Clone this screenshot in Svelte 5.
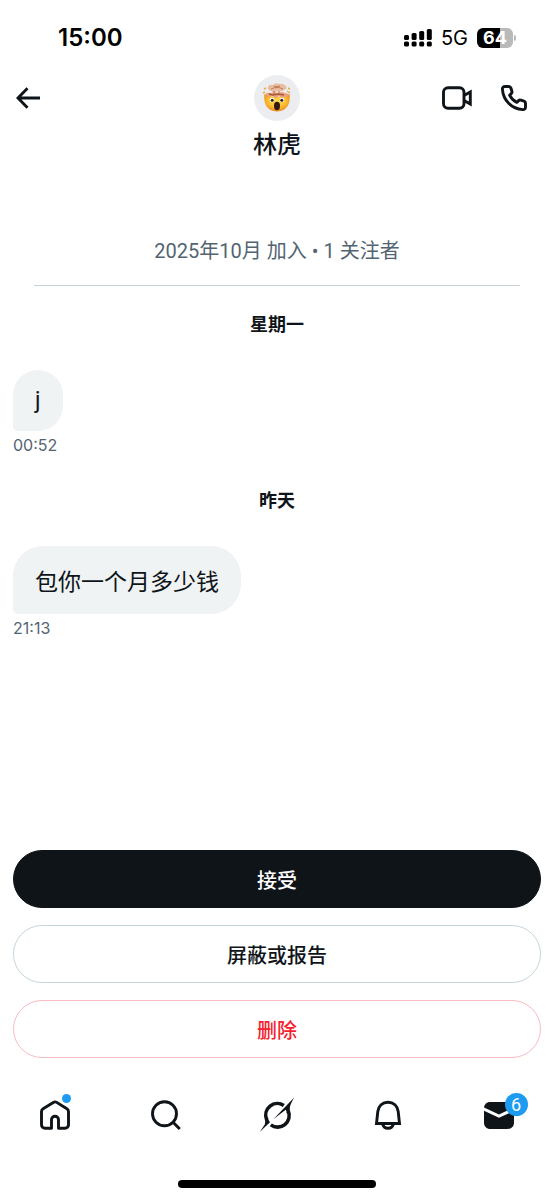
<script lang="ts">
	type Message = { day: string; text: string; time: string };

	const messages: Message[] = [
		{ day: '星期一', text: 'j', time: '00:52' },
		{ day: '昨天', text: '包你一个月多少钱', time: '21:13' }
	];

	const battery = 64;
	const bars = [5, 7, 9, 11];
	let unread = $state(6);
</script>

<div class="screen">
	<div class="status">
		<span class="clock">15:00</span>
		<div class="indicators">
			<svg class="signal" width="28" height="22" viewBox="0 0 28 22" aria-hidden="true">
				{#each bars as h, i}
					<rect x={i * 7.6} y={13 - h} width="5" height={h} rx="1.5" />
					<rect x={i * 7.6} y="14.5" width="5" height="5" rx="1.5" />
				{/each}
			</svg>
			<span class="network">5G</span>
			<div class="battery">
				<span class="cell" style="--charge: {battery}%">{battery}</span>
				<span class="cap"></span>
			</div>
		</div>
	</div>

	<header>
		<button class="icon back" aria-label="返回">
			<svg width="24" height="22" viewBox="0 0 24 22" fill="none" stroke="currentColor" stroke-width="2.9">
				<path d="M24 11H2.5M11.500 1.300L2 11l9.500 9.700" />
			</svg>
		</button>
		<div class="person">
			<div class="avatar">
				<svg width="30" height="30" viewBox="0 0 30 30" aria-hidden="true">
					<defs>
						<radialGradient id="face" cx="50%" cy="40%" r="60%">
							<stop offset="0" stop-color="#ffdc4a" />
							<stop offset="0.6" stop-color="#fbbd31" />
							<stop offset="1" stop-color="#e98b1c" />
						</radialGradient>
					</defs>
					<path d="M2.500 11C1 20 5 28.500 15 28.500S29 20 27.500 11q-4 3-12.500 3T2.500 11z" fill="url(#face)" />
					<path d="M3 11q3-2 6-1l3-1 4 1 4-1 3 1 4 1q-1 4-5 3l-2 1-3-2-3 2-4-2-3 1z" fill="#e9a17b" />
					<path d="M7 11l4 1 5-1 6 1" fill="none" stroke="#a85b3c" stroke-width="1.5" />
					<path d="M6 4Q7 1 11 2q3-3 6-1 4-1 7 2 2 3-2 4-2 2-6 1-4 2-7 0-4-1-3-4z" fill="#e9bda2" />
					<path d="M9 6q6-3 12 0M12 3l2 1 4-1M12 8v3M17 8v3" fill="none" stroke="#c27a58" stroke-width="1.2" />
					<path d="M2 6l2-1M1 10l2-1M26 5l2 1M25 8l3 2" stroke="#e9ae42" stroke-width="1.5" />
					<ellipse cx="10" cy="17" rx="2.3" ry="2.3" fill="#fff" />
					<ellipse cx="20" cy="17" rx="2.3" ry="2.3" fill="#fff" />
					<circle cx="10.2" cy="17.2" r="1.5" fill="#2f1c14" />
					<circle cx="19.8" cy="17.2" r="1.5" fill="#2f1c14" />
					<ellipse cx="15" cy="23" rx="3" ry="4.2" fill="#35170f" />
				</svg>
			</div>
			<h1>林虎</h1>
		</div>
		<div class="calls">
			<button class="icon" aria-label="视频通话">
				<svg width="30" height="24" viewBox="0 0 30 24" fill="none" stroke="currentColor" stroke-width="2.9">
					<rect x="1.5" y="1.8" width="20.5" height="20.4" rx="4.5" />
					<path d="M22 9.500l6.300-3.500v12L22 14.500" />
				</svg>
			</button>
			<button class="icon" aria-label="语音通话">
				<svg width="28" height="28" viewBox="0 0 28 28" fill="none" stroke="currentColor" stroke-width="2.9" stroke-linejoin="round">
					<path d="M8.800 2.500H5C3.300 2.500 2.300 3.500 2.400 5.200 3.200 16.500 11.500 24.800 22.800 25.600c1.700.1 2.700-.9 2.700-2.600v-3.800c0-1-.6-1.800-1.500-2.100l-3.200-1c-.9-.3-1.600-.1-2.200.5l-1.800 1.800c-3-1.400-5.800-4.200-7.200-7.200l1.800-1.800c.6-.6.8-1.300.5-2.200L10.900 4c-.3-.9-1.100-1.500-2.100-1.500z" />
				</svg>
			</button>
		</div>
	</header>

	<main>
		<p class="joined">2025年10月 加入 • 1 关注者</p>
		{#each messages as message}
			<section>
				<h2>{message.day}</h2>
				<div class="bubble">{message.text}</div>
				<time>{message.time}</time>
			</section>
		{/each}
	</main>

	<div class="actions">
		<button class="accept">接受</button>
		<button>屏蔽或报告</button>
		<button class="delete">删除</button>
	</div>

	<nav>
		<a href="#home" aria-label="主页">
			<svg width="30" height="30" viewBox="0 0 30 30" fill="none" stroke="currentColor" stroke-width="2.9" stroke-linejoin="round">
				<path d="M11.500 28.300H5c-2 0-3.500-1.500-3.500-3.500V11.500c0-1.200.6-2.200 1.600-2.800L13.300 2.400c1.100-.7 2.300-.7 3.400 0l10.200 6.300c1 .6 1.600 1.600 1.600 2.800v13.300c0 2-1.500 3.500-3.500 3.500h-6.500v-8.500c0-2-1.500-3.500-3.500-3.500s-3.500 1.500-3.500 3.500z" />
			</svg>
			<span class="dot"></span>
		</a>
		<a href="#search" aria-label="搜索">
			<svg width="30" height="30" viewBox="0 0 30 30" fill="none" stroke="currentColor" stroke-width="2.9">
				<circle cx="13.5" cy="13.7" r="12" />
				<path d="M22 22.200l6.800 6.800" />
			</svg>
		</a>
		<a href="#grok" aria-label="Grok">
			<svg width="36" height="36" viewBox="0 0 36 36" fill="none" stroke="currentColor" stroke-width="3.6">
				<path d="M24.800 8.500A11.600 11.600 0 0 0 7.600 22.500" />
				<path d="M11.800 27.900A11.600 11.600 0 0 0 29.300 14" />
				<path
					d="M14.300 22.300L35.200.6Q31.500 7 30.900 10q-.3 2.500.2 5l-3.400 1.500q0-2.500-1-3.700zM.7 34.900L5.800 27.500Q6.500 25 5.900 21.500l3.200-.8q.2 3 1.900 4.600z"
					fill="currentColor"
					stroke="none"
				/>
			</svg>
		</a>
		<a href="#notifications" aria-label="通知">
			<svg width="28" height="30" viewBox="0 0 28 30" fill="none" stroke="currentColor" stroke-width="2.9">
				<path d="M2.500 23.500h23l-1.300-12C23.600 6 19.500 2.200 14 2.200S4.400 6 3.800 11.500z" />
				<path d="M8.500 23.500c.5 3 2.700 4.800 5.500 4.800s5-1.800 5.500-4.800" />
			</svg>
		</a>
		<a href="#messages" aria-label="私信">
			<svg width="30" height="28" viewBox="0 0 30 28" fill="currentColor">
				<path d="M0 6.500C.5 2.800 3 1 6.500 1h17C27 1 29.500 2.800 30 6.500L15 13.500z" />
				<path d="M0 9.800l15 7 15-7v11.700c0 4-2.500 6.500-6.500 6.500h-17C2.500 28 0 25.500 0 21.500z" />
			</svg>
			{#if unread}
				<span class="badge">{unread}</span>
			{/if}
		</a>
	</nav>

	<div class="home-bar"></div>
</div>

<style>
	:global(body) {
		margin: 0;
		background: #fff;
	}

	.screen {
		display: flex;
		flex-direction: column;
		min-height: 100vh;
		color: #0f1419;
		font-family: Roboto, 'Noto Sans CJK SC', sans-serif;
	}

	button {
		font: inherit;
		color: inherit;
		cursor: pointer;
	}

	svg {
		display: block;
	}

	.status {
		display: flex;
		align-items: center;
		justify-content: space-between;
		height: 75px;
		padding: 0 38px 0 58px;
		color: #000;
		font-family: Inter, sans-serif;
	}

	.clock {
		font-size: 24px;
		font-weight: 600;
	}

	.indicators {
		display: flex;
		align-items: center;
		gap: 9px;
	}

	.network {
		font-size: 20px;
	}

	.battery {
		display: flex;
		align-items: center;
		gap: 1px;
	}

	.cell {
		width: 36px;
		border-radius: 6px;
		background: linear-gradient(to right, #000 var(--charge), #b9b9b9 var(--charge));
		color: #fff;
		font-size: 18px;
		font-weight: 700;
		line-height: 20px;
		text-align: center;
	}

	.cap {
		width: 2px;
		height: 6px;
		border-radius: 0 2px 2px 0;
		background: #b9b9b9;
	}

	header {
		display: grid;
		grid-template-columns: 1fr auto 1fr;
		align-items: start;
		padding: 0 26px 0 16px;
	}

	.icon {
		display: flex;
		align-items: center;
		height: 46px;
		padding: 0;
		border: 0;
		background: none;
	}

	.person {
		display: flex;
		flex-direction: column;
		align-items: center;
		gap: 8px;
		/* keeps the name centred against the uneven side padding */
		margin-left: 10px;
	}

	.avatar {
		display: flex;
		align-items: center;
		justify-content: center;
		width: 46px;
		height: 46px;
		border-radius: 50%;
		background: #ebedf1;
	}

	h1 {
		margin: 0;
		font-size: 24px;
		font-weight: 500;
		line-height: 32px;
	}

	.calls {
		display: flex;
		justify-content: flex-end;
		gap: 28px;
	}

	main {
		flex: 1;
		padding: 76px 13px 0;
	}

	.joined {
		margin: 0 21px;
		padding-bottom: 20px;
		border-bottom: 1px solid #c5d2dc;
		color: #536471;
		font-size: 20px;
		line-height: 28px;
		text-align: center;
	}

	section {
		display: flex;
		flex-direction: column;
		align-items: flex-start;
		padding-top: 26px;
		margin-bottom: 7px;
	}

	h2 {
		align-self: center;
		margin: 0 0 32px;
		font-size: 18px;
		font-weight: 700;
		line-height: 26px;
	}

	.bubble {
		padding: 17px 22px;
		border-radius: 30px 30px 30px 5px;
		background: #eff3f4;
		font-size: 23px;
	}

	time {
		margin-top: 4px;
		color: #536471;
		font-family: Inter, sans-serif;
		font-size: 16px;
		line-height: 20px;
	}

	.actions {
		display: flex;
		flex-direction: column;
		gap: 17px;
		padding: 0 13px;
	}

	.actions button {
		height: 58px;
		border: 1px solid #c5d5de;
		border-radius: 29px;
		background: #fff;
		font-size: 20px;
		font-weight: 500;
	}

	.actions .accept {
		border-color: #0f1419;
		background: #0f1419;
		color: #fff;
	}

	.actions .delete {
		border-color: #f9bcc3;
		color: #f4212e;
	}

	nav {
		display: grid;
		grid-template-columns: repeat(5, 1fr);
		height: 40px;
		margin-top: 37px;
	}

	nav a {
		position: relative;
		display: flex;
		align-items: center;
		justify-content: center;
		color: inherit;
		text-decoration: none;
	}

	.dot {
		position: absolute;
		top: -1px;
		left: calc(50% + 7px);
		width: 9px;
		height: 9px;
		border-radius: 50%;
		background: #1d9bf0;
	}

	.badge {
		position: absolute;
		top: -2px;
		left: calc(50% + 6px);
		width: 23px;
		height: 23px;
		border-radius: 50%;
		background: #1d9bf0;
		color: #fff;
		font-size: 18px;
		line-height: 23px;
		text-align: center;
	}

	.home-bar {
		width: 198px;
		height: 8px;
		margin: 45px auto 11px;
		border-radius: 4px;
		background: #000;
	}
</style>
